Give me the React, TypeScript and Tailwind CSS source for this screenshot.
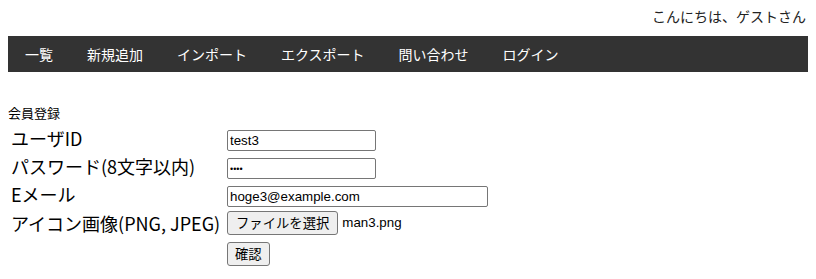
const navItems = ["一覧", "新規追加", "インポート", "エクスポート", "問い合わせ", "ログイン"];

const jp = "font-['Meiryo','Noto_Sans_CJK_JP',sans-serif]";

export default function App() {
  return (
    <div className={`${jp} bg-white text-black w-[816px] h-[279px] px-2`}>
      <div className="flex justify-end h-[36px] pt-[6px] pr-[2px] text-[14px] leading-[20px] text-[#222]">
        こんにちは、ゲストさん
      </div>

      <nav className="flex h-[36px] bg-[#333333]">
        {navItems.map((item) => (
          <a key={item} className="flex items-center px-[17px] text-[14px] text-white">
            {item}
          </a>
        ))}
      </nav>

      <div className="pt-[32px] text-[13px] leading-[18px]">会員登録</div>

      <div className="mt-[3px] flex flex-col gap-[2px] pl-[3px]">
        <Row label="ユーザID">
          <input
            readOnly
            value="test3"
            className="h-[21px] w-[149px] rounded-[2px] border border-[#767676] px-[2px] font-['Liberation_Sans',sans-serif] text-[13.33px]"
          />
        </Row>
        <Row label="パスワード(8文字以内)">
          <input
            readOnly
            value="••••"
            className="h-[21px] w-[149px] rounded-[2px] border border-[#767676] px-[2px] font-['Liberation_Sans',sans-serif] text-[9px]"
          />
        </Row>
        <Row label="Eメール">
          <input
            readOnly
            value="hoge3@example.com"
            className="h-[21px] w-[261px] rounded-[2px] border border-[#767676] px-[2px] font-['Liberation_Sans',sans-serif] text-[13.33px]"
          />
        </Row>
        <Row label="アイコン画像(PNG, JPEG)" tall>
          <div className="flex items-center gap-[4px]">
            <button className="h-[24px] rounded-[3px] border border-[#767676] bg-[#efefef] px-[8px] text-[13.33px] leading-none">
              ファイルを選択
            </button>
            <span className="font-['Liberation_Sans',sans-serif] text-[13.33px]">man3.png</span>
          </div>
        </Row>
        <Row label="" tall>
          <button className="h-[24px] rounded-[3px] border border-[#767676] bg-[#efefef] px-[7px] text-[13.33px] leading-none">
            確認
          </button>
        </Row>
      </div>
    </div>
  );
}

function Row({ label, tall, children }: { label: string; tall?: boolean; children: React.ReactNode }) {
  return (
    <div className={`flex items-center ${tall ? "h-[28px]" : "h-[26px]"}`}>
      <div className="w-[216px] shrink-0 text-[18px] leading-[24px] whitespace-nowrap">{label}</div>
      <div>{children}</div>
    </div>
  );
}
